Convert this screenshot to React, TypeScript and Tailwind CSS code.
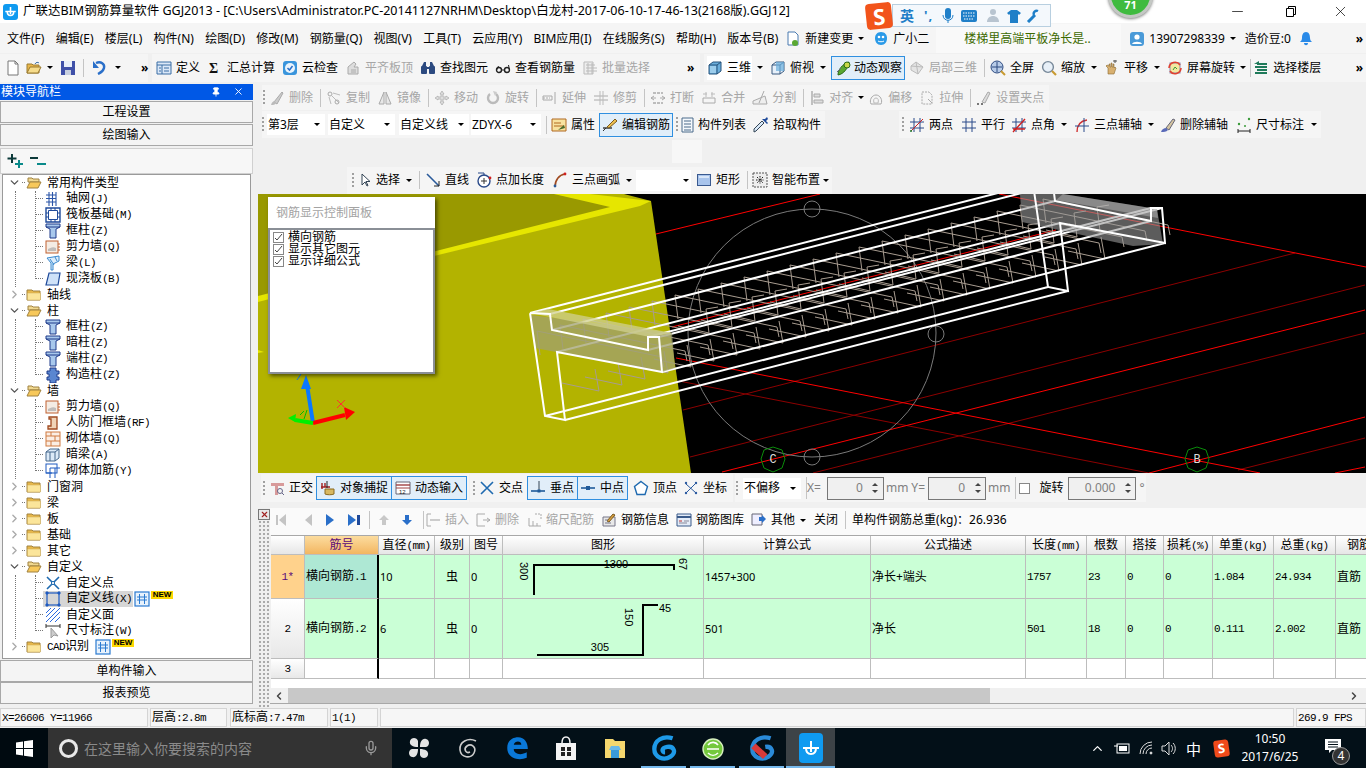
import type { ReactNode } from "react";
import { Minus, X, ChevronRight, ChevronDown, ChevronLeft, ChevronUp, Mic, Pin } from "lucide-react";

const icons: Record<string, ReactNode> = {
  doc: <><path d="M3 1h7l3 3v11H3z" fill="#fff" stroke="#777" /><path d="M10 1v3h3" stroke="#777" /></>,
  open: <><path d="M1 4h5l1 1h6v8H1z" fill="#e8b64a" stroke="#9a7a30" /><path d="M1 13l3-6h11l-3 6z" fill="#f6dc8c" stroke="#9a7a30" /><path d="M9 4c1-2 3-2 4-1" stroke="#3a6ea5" /></>,
  save: <><path d="M1 1h14v14H1z" fill="#3f50a8" /><path d="M4 1h8v6H4z" fill="#e8eef8" /><path d="M5 10h6v5H5z" fill="#c8d0e0" /></>,
  undo: <><path d="M5 3c5-2 9 1 8 5s-4 5-6 6" stroke="#2a6fc9" strokeWidth="2.4" /><path d="M2 1v7h6z" fill="#2a6fc9" /></>,
  define: <><path d="M1 2h14v12H1z" fill="#dbe8f8" stroke="#3a6ea5" /><path d="M1 5h14M6 5v9M3 8h2M3 11h2M8 8h5M8 11h5" stroke="#3a6ea5" /></>,
  sigma: <text x="2" y="13" fontSize="14" fontWeight="700" fill="#111" fontFamily="Liberation Serif">Σ</text>,
  cloud: <><rect x="1" y="1" width="14" height="14" rx="3" fill="#3a95dc" /><circle cx="8" cy="8" r="5" fill="#eaf4fc" /><path d="M5.5 8l2 2 3-4" stroke="#2a6fc9" strokeWidth="1.5" /></>,
  flush: <><path d="M3 14V7l6-5 2 2-2 3h4v7z" fill="#ddd" stroke="#aaa" /><path d="M6 10h5M6 12h5" stroke="#aaa" /></>,
  binoc: <><path d="M2 6l2-4h2v4zM14 6l-2-4h-2v4z" fill="#2c4a80" /><rect x="1" y="6" width="6" height="8" rx="1" fill="#2c4a80" /><rect x="9" y="6" width="6" height="8" rx="1" fill="#2c4a80" /><path d="M7 8h2" stroke="#2c4a80" strokeWidth="2" /></>,
  glass: <><circle cx="4" cy="10" r="2.5" stroke="#222" strokeWidth="1.4" /><circle cx="12" cy="10" r="2.5" stroke="#222" strokeWidth="1.4" /><path d="M6.5 10h3M1.5 10l2-4M14.5 10l-1-5" stroke="#222" /></>,
  batch: <><path d="M2 2h9v12H2z" fill="#eee" stroke="#bbb" /><path d="M4 5h9M4 8h11M4 11h11M6 3v11M10 3v11" stroke="#bbb" /></>,
  cube: <><path d="M2 5l4-3h8v9l-4 3H2z" fill="#6aaedc" stroke="#26527a" /><path d="M2 5h8v9M10 5l4-3" stroke="#26527a" /><path d="M3 6h6v7H3z" fill="#9ccdec" /></>,
  top: <><path d="M2 5l4-3h8v9l-4 3H2z" fill="#e6f0fa" stroke="#3a5a80" /><path d="M2 5h8v9M10 5l4-3" stroke="#3a5a80" /><path d="M6 2h8v9H6z" fill="#6aaedc" opacity=".7" /></>,
  orbit: <><path d="M2 15c0-5 4-11 11-13-1 6-5 12-11 13z" fill="#5aa832" stroke="#2c6a18" /><circle cx="11" cy="5" r="3" fill="#c8d84a" stroke="#2c6a18" /><path d="M1 12l4-4" stroke="#667" /></>,
  local: <><path d="M2 6l5-4 7 5-5 7-7-4z" fill="#e4e4e4" stroke="#bbb" /><path d="M7 2l2 12M2 6l12 1" stroke="#bbb" /></>,
  full: <><circle cx="7" cy="7" r="6" fill="#b8cce8" stroke="#2c4a80" /><path d="M7 2v10M2 7h10" stroke="#2c4a80" /><path d="M11 11l4 4" stroke="#c89a30" strokeWidth="2" /></>,
  zoom: <><circle cx="7" cy="7" r="5.4" fill="#e8f0f8" stroke="#789" strokeWidth="1.4" /><path d="M11 11l4 4" stroke="#c89a30" strokeWidth="2.2" /></>,
  pan: <><path d="M4 14V8L2 6l1-1 2 1V4h1v3h1V3h1v4h1V4h1v4l1-1 1 1-2 6z" fill="#d8b070" stroke="#8a6a30" strokeWidth=".6" /><path d="M9 1h4M11 0v3" stroke="#555" /></>,
  spin: <><rect x="3" y="3" width="10" height="10" fill="#f4e8a0" stroke="#88a" /><path d="M2 8a6 6 0 0 1 11-3M14 8a6 6 0 0 1-11 3" stroke="#e04030" strokeWidth="1.6" /><path d="M6 10l2-3 2 2" stroke="#3a9a3a" /></>,
  floors: <><path d="M4 4h10M2 7h12M4 10h10M2 13h12" stroke="#1f7a5a" strokeWidth="2" /><path d="M6 1L1 4h5z" fill="#1f7a5a" /></>,
  brush: <><path d="M5 12L13 2l1 1-6 11z" fill="#ccc" stroke="#aaa" /><path d="M2 15c1-3 2-4 4-4l1 2c-1 2-3 2-5 2z" fill="#bbb" /></>,
  copy: <><circle cx="4" cy="4" r="2" stroke="#aaa" /><path d="M6 6l7 7M7 3l7 2M3 7l2 7" stroke="#bbb" /><circle cx="11" cy="12" r="2" stroke="#aaa" /></>,
  mirror: <><path d="M7 2L2 14h5zM9 2l5 12H9z" fill="#e8e8e8" stroke="#aaa" /></>,
  move: <path d="M8 1l2 3H9v3h3V6l3 2-3 2V9H9v3h1l-2 3-2-3h1V9H4v1L1 8l3-2v1h3V4H6z" fill="#ddd" stroke="#aaa" strokeWidth=".7" />,
  rot: <><path d="M11 4a5 5 0 1 1-6 0" stroke="#bbb" strokeWidth="2.4" /><path d="M8 1l4 1-2 4z" fill="#ccc" /></>,
  extend: <><path d="M1 8h7" stroke="#aaa" strokeDasharray="2 1" /><path d="M1 6h9v4H1zM13 2v12" stroke="#aaa" /></>,
  trim: <><path d="M1 6h14M1 10h14" stroke="#aaa" /><path d="M7 1v14M10 1v14" stroke="#bbb" /></>,
  breakl: <><path d="M3 3h10M3 13h10" stroke="#aaa" strokeWidth="1.4" strokeDasharray="3 1" /><path d="M1 8h5M10 8h5M4 6L1 8l3 2M12 6l3 2-3 2" stroke="#aaa" /></>,
  merge: <><path d="M2 8h12v5H2z" stroke="#aaa" /><path d="M5 2v5M11 2v5M2 4h4M10 4h4" stroke="#bbb" /></>,
  split: <><path d="M1 14h14L13 6 1 11z" fill="#eee" stroke="#aaa" /><path d="M12 1l-5 12" stroke="#aaa" /></>,
  align: <><path d="M3 1v14" stroke="#aaa" strokeWidth="1.4" /><path d="M5 4h6v3H5zM5 10h9v3H5z" fill="#ddd" stroke="#aaa" /></>,
  offset: <><path d="M3 14c-2-4 1-9 5-9s7 5 5 9z" stroke="#aaa" /><path d="M6 13c-1-3 0-5 2-5s3 2 2 5z" stroke="#bbb" /></>,
  stretch: <><path d="M3 2h7l3 3v9H3z" stroke="#aaa" strokeDasharray="2 1" /><path d="M9 9l4 4" stroke="#aaa" /></>,
  gripset: <><path d="M6 12L12 2l2 1-5 10z" fill="#ddd" stroke="#aaa" /><path d="M1 14h2M5 14h2" stroke="#777" strokeWidth="2" /></>,
  attr: <><path d="M1 2h14v12H1z" fill="#f7e2a0" stroke="#b06820" /><path d="M3 6h7M3 9h10" stroke="#b06820" /><path d="M7 13l6-5 1 3z" fill="#4a6a2a" /></>,
  pencil: <><path d="M1 11h9" stroke="#333" strokeWidth="1.4" /><path d="M5 10l8-8 2 2-8 7z" fill="#eec050" stroke="#7a5a20" /><path d="M1 14l3-3" stroke="#333" /></>,
  list: <><path d="M4 1h11v14H4z" fill="#f4f8fc" stroke="#4a6a8a" /><path d="M6 4h7M6 7h7M6 10h7M6 13h7" stroke="#4a6a8a" /></>,
  pick: <><path d="M1 15l2-1 8-8-2-2-8 8z" fill="#d8e8f8" stroke="#345" /><path d="M9 2l5 5 1-1-2-2 2-2-1-2-2 2z" fill="#1f4a9a" /></>,
  twop: <><path d="M5 1v14M11 1v14M1 5h14M1 11h14" stroke="#2a4a8a" /><path d="M2 14L14 2" stroke="#d02020" /><circle cx="2" cy="14" r="1" fill="#1a7a2a" /></>,
  para: <path d="M5 1v14M11 1v14M1 5h14M1 11h14" stroke="#2a4a8a" />,
  angle: <><path d="M5 1v14M11 1v14M1 5h14M1 11h14" stroke="#2a4a8a" /><path d="M2 15L14 2M2 12h12" stroke="#d02020" strokeWidth="1.4" /></>,
  threea: <><path d="M3 15C3 9 6 4 13 3" stroke="#d03030" strokeWidth="1.4" /><path d="M1 9h14M10 1v14" stroke="#2a4a8a" /></>,
  delaxis: <><path d="M6 11l7-9 2 1-6 10z" fill="#d4c4a0" stroke="#667" /><path d="M1 15c1-3 3-4 5-4l2 2c-2 2-4 2-7 2z" fill="#5a6ab8" /></>,
  dims: <><path d="M2 14h12M2 12v4M14 12v4" stroke="#222" /><circle cx="3" cy="7" r="1.2" fill="#3a9a3a" /><circle cx="9" cy="9" r="1" fill="#3a9a3a" /><circle cx="13" cy="2" r="1.2" fill="#3a9a3a" /></>,
  cursor: <path d="M6 2v11l3-3 2 4 1-.5-2-4h4z" fill="#fff" stroke="#345" />,
  line: <><path d="M2 2l12 12" stroke="#2a5a9a" strokeWidth="1.6" /><path d="M14 9v5H9" stroke="#222" /></>,
  ptlen: <><circle cx="8" cy="9" r="6" fill="#fff" stroke="#2a4a8a" strokeWidth="1.4" /><path d="M8 6v6M5 9h6" stroke="#333" /><path d="M2 1h6v3" stroke="#2a4a8a" /><circle cx="14" cy="6" r="1.4" fill="#d02020" /></>,
  arc: <><path d="M3 15C3 8 7 3 13 2" stroke="#a04a20" strokeWidth="1.6" /><circle cx="3" cy="14" r="1.4" fill="#2a5a9a" /><circle cx="13" cy="2" r="1.4" fill="#d02020" /></>,
  rect: <><rect x="1.5" y="2.5" width="13" height="11" fill="#a8c4ec" stroke="#3a5a90" /><path d="M3 4h10v2H3z" fill="#d8e6f8" /></>,
  smart: <><path d="M1 1h14v14H1z" fill="#eee" stroke="#555" strokeDasharray="2 1" /><path d="M8 4v8M4 8h8M5 5l6 6M11 5l-6 6" stroke="#222" strokeDasharray="1.5 1" /></>,
  ortho: <><path d="M2 3h13v3H9v9H6V6H2z" fill="#d89a9a" /><circle cx="11" cy="11" r="2.5" stroke="#668" /><path d="M13 13l2 2" stroke="#668" /></>,
  snap: <><path d="M2 3v6M5 3v4M1 7h9" stroke="#a02020" strokeWidth="1.4" /><path d="M7 1v7" stroke="#222" /><path d="M5 9h9v5c-2 1-7 1-9 0z" fill="#d8b860" stroke="#8a6a20" /></>,
  dyn: <><path d="M1 2h14v12H1z" fill="#fff" stroke="#667" /><path d="M1 5h14" stroke="#a04040" strokeWidth="1.4" /><path d="M1 8h14" stroke="#a04040" /><text x="4" y="14" fontSize="6" fill="#222" fontFamily="Liberation Sans">12</text></>,
  cross: <path d="M2 2l12 12M14 2L2 14" stroke="#1f6ab0" strokeWidth="1.6" />,
  perp: <><path d="M1 11h14" stroke="#1f5a9a" strokeWidth="1.6" /><path d="M9 1v10" stroke="#345" /><rect x="7.5" y="9.5" width="3" height="3" fill="#1f5a9a" /></>,
  mid: <><path d="M1 8h14" stroke="#1f5a9a" strokeWidth="1.6" /><rect x="6" y="6" width="4" height="4" fill="#1f5a9a" /></>,
  vertex: <path d="M8 1.5l6.5 5-2.5 8H4l-2.5-8z" fill="#fff" stroke="#1f6ab0" strokeWidth="1.4" />,
  coord: <><path d="M3 13L13 3M3 4l10 9" stroke="#2a5aa0" /><circle cx="3" cy="3" r="1.2" fill="#2a5aa0" /><circle cx="13" cy="3" r="1.2" fill="#2a5aa0" /><circle cx="3" cy="13" r="1.2" fill="#2a5aa0" /><circle cx="13" cy="13" r="1.2" fill="#2a5aa0" /></>,
  first: <><path d="M3 3h2v10H3z" fill="#c4c4c4" /><path d="M13 2v12L6 8z" fill="#c4c4c4" /></>,
  prev: <path d="M12 2v12L5 8z" fill="#c4c4c4" />,
  next: <path d="M4 2v12l8-6z" fill="#2a6fc9" />,
  last: <><path d="M2 2v12l8-6z" fill="#2a6fc9" /><path d="M11 3h3v10h-3z" fill="#1f4a9a" /></>,
  up: <path d="M8 3l5 5h-3v5H6V8H3z" fill="#c8c8c8" />,
  down: <path d="M6 3h4v5h3l-5 5-5-5h3z" fill="#2a6fc9" />,
  ins: <><path d="M2 2h4M2 14h4M2 2v12" stroke="#aaa" /><path d="M5 7h10v2H5z" fill="#ccc" /></>,
  del: <><path d="M2 2h8M2 14h8M2 2v12" stroke="#aaa" /><path d="M8 8h7M12 6l3 2-3 2" stroke="#aaa" /></>,
  scale: <><path d="M2 14V6M6 14V9M10 14v-3M2 14h12" stroke="#aaa" /><path d="M8 2h6v5" stroke="#aaa" strokeDasharray="2 1" /></>,
  info: <><path d="M2 5h12v9H2z" fill="#e8e8e8" stroke="#778" /><path d="M6 9l6-7 2 1-6 7z" fill="#d8a040" stroke="#7a5a20" /><path d="M4 8h3M4 11h6" stroke="#778" /></>,
  lib: <><path d="M1 2h14v12H1z" fill="#e4ecf8" stroke="#3a5a8a" /><path d="M1 5h14" stroke="#3a5a8a" strokeWidth="2" /><path d="M3 9h3" stroke="#c03030" /><path d="M8 9h5M3 11h8" stroke="#889" /></>,
  other: <><path d="M1 2h10v11H1z" fill="#eef" stroke="#667" /><path d="M8 5h3V3l4 4-4 4V9H8z" fill="#2a6fc9" /></>,
  grid: <path d="M4 1v14M7.5 1v14M11 1v14M1 4h10M1 7.5h10M1 11h10" stroke="#2a55a8" strokeWidth="1.1" />,
  raft: <><path d="M1 1h14v14H1z" stroke="#1f4a9a" strokeWidth="1.4" /><path d="M3.5 3.5h9v9h-9zM1 6h2M1 10h2M13 6h2M13 10h2M6 1v2M10 1v2M6 13v2M10 13v2" stroke="#1f4a9a" /></>,
  col: <><path d="M1 1h14v3l-4 2v9H5V6L1 4z" fill="#a8c8ec" stroke="#1f3a8a" /><path d="M1 4h14" stroke="#1f3a8a" /></>,
  wall: <><rect x="1" y="2" width="12" height="12" fill="#f4ece4" stroke="#c06030" /><path d="M13 5h2M13 8h2M13 11h2" stroke="#c06030" /><path d="M3 12h8v-3c-3-2-6 0-8 1z" fill="#aaa" opacity=".7" /></>,
  beam: <><path d="M2 3l12-2v5l-6 3v6H6V8z" fill="#dcecfa" stroke="#3a8ad0" /><path d="M5 4l4 6M10 2l2 4" stroke="#3a8ad0" /></>,
  slab: <path d="M4 2h11l-2 12H1z" fill="#cfe2f8" stroke="#1f4a9a" strokeWidth="1.2" />,
  pier: <path d="M5 1h6v3h3v3h-2v3h2v3h-3v3H5v-3H2v-3h2V7H2V4h3z" fill="#5a86d0" stroke="#1f3a8a" />,
  door: <path d="M4 2h8v12H3v-3h3V4H4z" fill="#f0d4b8" stroke="#a04a20" strokeWidth="1.3" />,
  brick: <><rect x="1" y="1" width="14" height="14" fill="#fbeee4" stroke="#d07a40" /><path d="M1 5h14M1 10h14M6 1v4M10 5v5M6 10v5" stroke="#d07a40" /></>,
  hbeam: <><path d="M1 5l4-3h9v9l-4 3H1z" fill="#dceaf8" stroke="#46688c" /><path d="M1 5h9v9M10 5l4-3M5 5v9" stroke="#46688c" /></>,
  rebar: <><rect x="1" y="1" width="11" height="9" stroke="#1f5ac0" /><path d="M5 5h10M5 5v10M10 5v10M1 10h6" stroke="#1f5ac0" /></>,
  xpoint: <><path d="M2 2l12 12M14 2L2 14" stroke="#1f6ab0" strokeWidth="1.6" /><circle cx="8" cy="8" r="1.6" fill="#fff" stroke="#1f6ab0" /></>,
  sqline: <><rect x="2" y="2" width="12" height="12" stroke="#1f5ac0" strokeWidth="1.2" /><path d="M1 1h2v2H1zM13 1h2v2h-2zM1 13h2v2H1zM13 13h2v2h-2z" fill="#1f5ac0" stroke="#1f5ac0" /></>,
  hatch: <path d="M1 6l5-5M1 10l9-9M1 15L15 1M5 15L15 5M10 15l5-5" stroke="#2a6ae0" />,
  dim: <><path d="M1 1v4M15 1v4M1 3h14" stroke="#333" /><path d="M6 5v10l3-3 4 1z" fill="#ccc" stroke="#999" /></>,
  fold: <><path d="M1 3h5l1 1h7v9H1z" fill="#e8b84a" stroke="#a08240" /><path d="M1.5 6h13v7h-13z" fill="#fbe59a" stroke="#c8a858" strokeWidth=".5" /></>,
  folo: <><path d="M2 3h4l1 1h6v3H2z" fill="#f0d890" stroke="#a08240" /><path d="M1 13l3-6h11l-3 6z" fill="#f7c85a" stroke="#a08240" /></>,
  tbl: <><rect x="1" y="1" width="14" height="14" fill="#e8f2fc" stroke="#2a7ad0" strokeWidth="1.2" /><path d="M5.5 3v10M10.5 3v10M3 6h10M3 9h10" stroke="#2a7ad0" /></>,
  phone: <><rect x="1" y="1" width="14" height="14" rx="3" fill="#4a9ad8" /><circle cx="8" cy="6" r="2.6" fill="#fff" /><path d="M3 13c1-3 9-3 10 0z" fill="#fff" /></>,
  newc: <><path d="M3 1h7l3 3v10H3z" fill="#fff" stroke="#4a7ab0" /><circle cx="10" cy="12" r="3" fill="#5aa832" /></>,
  robot: <><path d="M8 1c4 0 6 3 6 6 0 4-2 7-6 7s-6-3-6-7c0-3 2-6 6-6z" fill="#2a9ae8" /><circle cx="6" cy="6" r="1.3" fill="#fff" /><circle cx="10" cy="6" r="1.3" fill="#fff" /><path d="M5 10c1 1 5 1 6 0" stroke="#fff" /></>,
  bell: <path d="M8 1c3 0 4 3 4 6 0 2 1 3 2 4H2c1-1 2-2 2-4 0-3 1-6 4-6zM6 12h4c0 3-4 3-4 0z" fill="#2a8ae8" />,
};

function I({ n }: { n: string }) {
  return (
    <svg width={16} height={16} viewBox="0 0 16 16" fill="none" className="shrink-0">
      {icons[n]}
    </svg>
  );
}

function Caret({ cn = "" }: { cn?: string }) {
  return <span className={`shrink-0 w-0 h-0 border-x-[3px] border-x-transparent border-t-[3px] border-t-black ${cn}`} />;
}

function Grip({ cn = "" }: { cn?: string }) {
  return <span className={`shrink-0 w-[2px] h-[15px] bg-[repeating-linear-gradient(to_bottom,#a0a0a0_0_2px,transparent_2px_4px)] ${cn}`} />;
}

function Sep({ cn = "" }: { cn?: string }) {
  return <span className={`shrink-0 w-px h-[18px] bg-[#c4c4c4] -mr-[2px] ${cn}`} />;
}

function More({ cn = "" }: { cn?: string }) {
  return <span className={`text-[12px] font-bold leading-none ${cn}`}>»</span>;
}

type ToolProps = { i: string; t: string; cn?: string; off?: boolean; caret?: boolean };

function Tool({ i, t, cn = "", off, caret }: ToolProps) {
  return (
    <div className={`flex items-center gap-[4px] shrink-0 ${off ? "text-[#a6a6a6]" : ""} ${cn}`}>
      <I n={i} />
      <span className="whitespace-nowrap">{t}</span>
      {caret && <Caret cn="ml-[1px]" />}
    </div>
  );
}

// 蓝框按下状态的按钮
function On({ i, t, cn = "" }: { i: string; t: string; cn?: string }) {
  return (
    <div className={`flex items-center gap-[4px] shrink-0 h-[24px] border border-[#2f8fe0] bg-[#e1eef9] ${cn}`}>
      <I n={i} />
      <span className="whitespace-nowrap">{t}</span>
    </div>
  );
}

function Combo({ t, cn }: { t: string; cn: string }) {
  return (
    <div className={`flex items-center justify-between shrink-0 h-[21px] bg-white pl-[1px] pr-[5px] ${cn}`}>
      <span className="whitespace-nowrap">{t}</span>
      <Caret />
    </div>
  );
}

// 宋体风格：ascii 半角 6px 等宽
function Sim({ t }: { t: string }) {
  const parts = t.split(/([\x20-\x7e]+)/).filter(Boolean);
  return (
    <span className="whitespace-nowrap">
      {parts.map((p, k) =>
        /^[\x20-\x7e]+$/.test(p) ? (
          <span key={k} className="font-['Liberation_Mono',monospace] text-[11px] tracking-[-0.6px]">
            {p}
          </span>
        ) : (
          <span key={k}>{p}</span>
        )
      )}
    </span>
  );
}

function NewBadge() {
  return (
    <span className="flex items-start h-[16px] ml-[1px]">
      <I n="tbl" />
      <span className="ml-[1px] mt-[0px] h-[8px] w-[22px] bg-[#ffd800] text-[8px] leading-[8px] text-center font-['Liberation_Sans',sans-serif] font-bold">NEW</span>
    </span>
  );
}

function Leaf({ i, t, sel, badge }: { i: string; t: string; sel?: boolean; badge?: boolean }) {
  return (
    <div className="flex items-center h-[16px] pl-[32px]">
      <span className="w-[8px] border-t border-dotted border-[#777]" />
      <span className={`flex items-center gap-[5px] h-[16px] pl-[2px] pr-[1px] ${sel ? "bg-[#d6d6d6]" : ""}`}>
        <I n={i} />
        <Sim t={t} />
      </span>
      {badge && <NewBadge />}
    </div>
  );
}

function Folder({ t, open, badge, children }: { t: string; open?: boolean; badge?: boolean; children?: ReactNode }) {
  return (
    <div>
      <div className="flex items-center h-[16px] pl-[5px]">
        {open ? <ChevronDown size={13} strokeWidth={2.5} className="text-[#555] shrink-0" /> : <ChevronRight size={13} strokeWidth={2.5} className="text-[#aaa] shrink-0" />}
        <span className="w-[3px] ml-[1px] mr-[1px] border-t border-dotted border-[#777]" />
        <I n={open ? "folo" : "fold"} />
        <span className="ml-[5px] flex items-center gap-[5px]">
          <Sim t={t} />
          {badge && <NewBadge />}
        </span>
      </div>
      {open && (
        <div className="relative">
          <span className="absolute left-[12px] top-0 bottom-0 border-l border-dotted border-[#777]" />
          <span className="absolute left-[32px] top-0 bottom-[8px] border-l border-dotted border-[#777]" />
          {children}
        </div>
      )}
    </div>
  );
}

function NavBtn({ t }: { t: string }) {
  return <div className="h-[22px] shrink-0 border border-[#a8a8a8] bg-[#f4f4f4] flex items-center justify-center">{t}</div>;
}

function TreePanel() {
  return (
    <div className="w-[253px] shrink-0 h-[620px] flex flex-col">
      <div className="h-[16px] bg-[#0058e6] text-white flex items-center pl-[1px] pr-[9px] leading-none">
        <span className="flex-1">模块导航栏</span>
        <Pin size={10} className="mr-[12px]" fill="white" />
        <X size={11} />
      </div>
      <div className="h-[1px]" />
      <NavBtn t="工程设置" />
      <div className="h-[1px]" />
      <NavBtn t="绘图输入" />
      <div className="h-[2px]" />
      <div className="h-[26px] border border-[#d0d0d0] bg-[#f7f7f7] flex items-center pl-[5px] gap-[5px]">
        <svg width="18" height="15" viewBox="0 0 18 15" fill="none">
          <path d="M6 1v9M1.500 5.500h9" stroke="#0c3a3a" strokeWidth="2" />
          <path d="M13 7v8M9 11h8" stroke="#0a8a8a" strokeWidth="2" />
        </svg>
        <svg width="18" height="15" viewBox="0 0 18 15" fill="none">
          <path d="M1 5h8" stroke="#0c3a3a" strokeWidth="2" />
          <path d="M8 11h9" stroke="#0a8a8a" strokeWidth="2" />
        </svg>
      </div>
      <div className="mx-[2px] h-[488px] border border-[#9a9a9a] bg-white overflow-hidden">
        <Folder t="常用构件类型" open>
          <Leaf i="grid" t="轴网(J)" />
          <Leaf i="raft" t="筏板基础(M)" />
          <Leaf i="col" t="框柱(Z)" />
          <Leaf i="wall" t="剪力墙(Q)" />
          <Leaf i="beam" t="梁(L)" />
          <Leaf i="slab" t="现浇板(B)" />
        </Folder>
        <Folder t="轴线" />
        <Folder t="柱" open>
          <Leaf i="col" t="框柱(Z)" />
          <Leaf i="col" t="暗柱(Z)" />
          <Leaf i="col" t="端柱(Z)" />
          <Leaf i="pier" t="构造柱(Z)" />
        </Folder>
        <Folder t="墙" open>
          <Leaf i="wall" t="剪力墙(Q)" />
          <Leaf i="door" t="人防门框墙(RF)" />
          <Leaf i="brick" t="砌体墙(Q)" />
          <Leaf i="hbeam" t="暗梁(A)" />
          <Leaf i="rebar" t="砌体加筋(Y)" />
        </Folder>
        <Folder t="门窗洞" />
        <Folder t="梁" />
        <Folder t="板" />
        <Folder t="基础" />
        <Folder t="其它" />
        <Folder t="自定义" open>
          <Leaf i="xpoint" t="自定义点" />
          <Leaf i="sqline" t="自定义线(X)" sel badge />
          <Leaf i="hatch" t="自定义面" />
          <Leaf i="dim" t="尺寸标注(W)" />
        </Folder>
        <Folder t="CAD识别" badge />
      </div>
      <div className="h-[1px]" />
      <NavBtn t="单构件输入" />
      <NavBtn t="报表预览" />
    </div>
  );
}

const STIRRUPS = Array.from({ length: 23 }, (_, k) => ({ x: 537 + 23 * k, y: 331 - 6 * k }));
const SHORT = STIRRUPS.slice(3, 21);

const BRIGHT = [
  "999,194 1366,267",
  "676,358 1260,473",
  "656,234 820,194",
  "722,472 1365,310",
  "1149,473 1365,417",
  "1335,473 1365,467",
  "672,327 1056,230",
];
const DARK = [
  "679,381 1149,473",
  "683,410 1295,253",
  "690,457 1365,285",
  "813,473 1365,333",
  "1238,470 1365,438",
];

// Z 形截面轮廓，远端 = 近端 + FAR
const PROFILE: [number, number][] = [
  [530, 313], [550, 314], [552, 330], [648, 350], [648, 337], [659, 337], [662, 372], [557, 352], [565, 420], [545, 416],
];
const FAR: [number, number] = [503, -129];
const pts = (list: [number, number][], dx = 0, dy = 0) =>
  [...list, list[0]].map(([x, y]) => `${x + dx},${y + dy}`).join(" ");

function Scene() {
  return (
    <svg viewBox="258 194 1108 279" className="block w-full h-full" fill="none">
      <rect x="258" y="194" width="1108" height="279" fill="#000" />
      {DARK.map((p) => <polyline key={p} points={p} stroke="#8c0000" strokeWidth="1" />)}
      {BRIGHT.map((p) => <polyline key={p} points={p} stroke="#ff0000" strokeWidth="1" />)}
      <circle cx="812" cy="333" r="124" stroke="#7a7a7a" />
      <circle cx="812" cy="209" r="8" stroke="#7a7a7a" />
      <circle cx="936" cy="334" r="8" stroke="#7a7a7a" />
      <circle cx="812" cy="457" r="8" stroke="#7a7a7a" />
      <polygon points="773,447 782,450 785,459 782,468 773,472 764,468 761,459 764,450" stroke="#0a8a0a" />
      <polygon points="1197,447 1206,450 1209,459 1206,468 1197,472 1188,468 1185,459 1188,450" stroke="#0a8a0a" />
      <text x="773" y="463" textAnchor="middle" fontSize="12" fill="#ddd" fontFamily="Liberation Mono">C</text>
      <text x="1197" y="463" textAnchor="middle" fontSize="12" fill="#ddd" fontFamily="Liberation Mono">B</text>
      <polygon points="258,194 624,194 651,201 691,473 258,473" fill="#b3b300" />
      <polygon points="258,194 554,194 620,207 258,297" fill="#999900" />
      <polygon points="554,194 590,194 651,201 640,206 434,256 258,302 258,296 610,207" fill="#e6e600" />
      <polygon points="258,350 264,352 258,353" fill="#e6e600" />
      {STIRRUPS.map((s) => (
        <g key={s.x} stroke="#a89c90" strokeWidth="1">
          <polyline points={`${s.x + 3},${s.y + 24} ${s.x},${s.y} ${s.x + 125},${s.y + 26} ${s.x + 127},${s.y + 36}`} />
          <polyline points={`${s.x + 58},${s.y + 38} ${s.x + 62},${s.y + 60} ${s.x + 25},${s.y + 52}`} />
        </g>
      ))}
      {SHORT.map((s) => (
        <polyline key={s.x} points={`${s.x + 112},${s.y - 6} ${s.x + 100},${s.y - 4} ${s.x + 103},${s.y + 20} ${s.x + 72},${s.y + 13}`} stroke="#a89c90" strokeWidth="1" />
      ))}
      {PROFILE.map(([x, y]) => (
        <line key={x} x1={x} y1={y} x2={x + FAR[0]} y2={y + FAR[1]} stroke="#fff" strokeWidth="2" />
      ))}
      {/* 半透明端面 */}
      <polygon points="1020,194 1063,194 1157,209 1163,244 1133,246 1022,222" fill="#999" opacity="0.6" />
      <polygon points="1063,194 1157,209 1158,218 1056,200" fill="#ccc" opacity="0.4" />
      <polygon points="531,315 535,348 662,372 675,368 672,333" fill="#a0a070" opacity="0.75" />
      <polygon points="530,313 548,309 672,333 650,337" fill="#d0d090" opacity="0.75" />
      <polyline points={pts(PROFILE, FAR[0], FAR[1])} stroke="#fff" strokeWidth="2" />
      <polyline points={pts(PROFILE)} stroke="#fff" strokeWidth="2" />
      <path d="M313 423L307 385" stroke="#0a78ff" strokeWidth="4" />
      <path d="M306 375l-5 14h10z" fill="#0a78ff" />
      <path d="M313 423l32-8" stroke="#ff0000" strokeWidth="4" />
      <path d="M355 412l-11-5 2 13z" fill="#ff0000" />
      <path d="M313 423l-18-3" stroke="#00f000" strokeWidth="4" />
      <path d="M288 418l8-4-1 8z" fill="#00f000" />
      <path d="M297 380l6-9h-6l6 0" stroke="#0a78ff" />
      <path d="M337 408l8-8M337 400l8 8" stroke="#ff3030" />
      <path d="M300 415l4-4M304 419l3-9" stroke="#00c000" />
    </svg>
  );
}

function CheckRow({ t }: { t: string }) {
  return (
    <div className="flex items-center h-[12px] pl-[3px] gap-[4px]">
      <span className="w-[11px] h-[11px] border border-[#888] bg-white flex items-center justify-center shrink-0">
        <svg width="9" height="9" viewBox="0 0 9 9" fill="none"><path d="M1 5l2 2 5-6" stroke="#444" /></svg>
      </span>
      <span className="leading-[12px] whitespace-nowrap">{t}</span>
    </div>
  );
}

function Spin({ t, cn }: { t: string; cn: string }) {
  return (
    <div className={`flex items-center justify-end h-[23px] border border-[#777] bg-[#f0f0f0] text-[#808080] shrink-0 ${cn}`}>
      <span>{t}</span>
      <span className="w-[15px] ml-[5px] flex flex-col items-center gap-[4px]">
        <span className="w-0 h-0 border-x-[3px] border-x-transparent border-b-[3px] border-b-[#444]" />
        <span className="w-0 h-0 border-x-[3px] border-x-transparent border-t-[3px] border-t-[#444]" />
      </span>
    </div>
  );
}

const HEAD = "flex items-center justify-center border-r border-b border-[#bdbdbd] bg-gradient-to-b from-white to-[#e6e6e6] overflow-hidden";
const CELL = "flex items-center pl-[1px] border-r border-b border-[#bdbdbd] bg-[#caffd6] overflow-hidden";
const CENTER = "flex items-center justify-center border-r border-b border-[#bdbdbd] bg-[#caffd6]";
const BLANK = "border-r border-b border-[#bdbdbd] bg-white";
const SIDE = "flex items-center justify-center border-r border-b border-[#bdbdbd] bg-gradient-to-b from-white to-[#e8e8e8]";

function DataRow({ no, name, d, formula, desc, len, n, unit, total, shape, active }: {
  no: string; name: string; d: string; formula: string; desc: string; len: string; n: string; unit: string; total: string; shape: ReactNode; active?: boolean;
}) {
  return (
    <>
      <div className={active ? "flex items-center justify-center border-r border-b border-[#bdbdbd] bg-[#ffd28c] text-[#5a0a7a]" : SIDE}><Sim t={no} /></div>
      <div className={`flex items-center pl-[1px] border-r-2 border-r-black border-b border-b-[#bdbdbd] ${active ? "bg-[#aee8d4]" : "bg-[#caffd6]"}`}><Sim t={name} /></div>
      <div className={`${CELL} text-[11px]`}>{d}</div>
      <div className={CENTER}>虫</div>
      <div className={`${CELL} text-[11px]`}>0</div>
      <div className={`${CELL} !pl-0`}>{shape}</div>
      <div className={`${CELL} text-[11px]`}>{formula}</div>
      <div className={CELL}>{desc}</div>
      <div className={CELL}><Sim t={len} /></div>
      <div className={CELL}><Sim t={n} /></div>
      <div className={CELL}><Sim t="0" /></div>
      <div className={CELL}><Sim t="0" /></div>
      <div className={CELL}><Sim t={unit} /></div>
      <div className={CELL}><Sim t={total} /></div>
      <div className="flex items-center pl-[1px] border-b border-[#bdbdbd] bg-[#caffd6]">直筋</div>
    </>
  );
}

function SteelTable() {
  const heads = ["直径(mm)", "级别", "图号", "图形", "计算公式", "公式描述", "长度(mm)", "根数", "搭接", "损耗(%)", "单重(kg)", "总重(kg)"];
  return (
    <div className="grid grid-cols-[34px_74px_56px_35px_33px_201px_167px_155px_61px_39px_38px_49px_61px_62px_30px] grid-rows-[19px_44px_60px_20px] border-t border-[#a8a8a8]">
      <div className={HEAD} />
      <div className="flex items-center justify-center border-r border-b border-[#bdbdbd] bg-gradient-to-b from-[#fcdc9e] to-[#f2b660] text-[#5a0a7a]">筋号</div>
      {heads.map((h) => <div key={h} className={HEAD}><Sim t={h} /></div>)}
      <div className="flex items-center pl-[11px] border-b border-[#bdbdbd] bg-gradient-to-b from-white to-[#e6e6e6] overflow-hidden whitespace-nowrap">钢筋归类</div>

      <DataRow
        active no="1*" name="横向钢筋.1" d="10" formula="1457+300" desc="净长+端头" len="1757" n="23" unit="1.084" total="24.934"
        shape={
          <svg width="200" height="43" viewBox="0 0 200 43" fill="none" className="shrink-0">
            <path d="M31 40V10H171V15" stroke="#000" strokeWidth="2" />
            <text x="113" y="13" textAnchor="middle" fontSize="11" fill="#000" fontFamily="Liberation Sans">1300</text>
            <text transform="translate(17 7) rotate(90)" fontSize="11" fill="#000" fontFamily="Liberation Sans">300</text>
            <text transform="translate(176 3) rotate(90)" fontSize="11" fill="#000" fontFamily="Liberation Sans">67</text>
          </svg>
        }
      />
      <DataRow
        no="2" name="横向钢筋.2" d="6" formula="501" desc="净长" len="501" n="18" unit="0.111" total="2.002"
        shape={
          <svg width="200" height="59" viewBox="0 0 200 59" fill="none" className="shrink-0">
            <path d="M34 56H140V6H155" stroke="#000" strokeWidth="2" />
            <text x="97" y="52" textAnchor="middle" fontSize="11" fill="#000" fontFamily="Liberation Sans">305</text>
            <text x="156" y="13" fontSize="11" fill="#000" fontFamily="Liberation Sans">45</text>
            <text transform="translate(122 9) rotate(90)" fontSize="11" fill="#000" fontFamily="Liberation Sans">150</text>
          </svg>
        }
      />
      <div className={SIDE}><Sim t="3" /></div>
      <div className="border-r-2 border-r-black border-b border-b-[#bdbdbd] bg-white" />
      {Array.from({ length: 12 }, (_, k) => <div key={k} className={BLANK} />)}
      <div className="border-b border-[#bdbdbd] bg-white" />
    </div>
  );
}

function TaskIcon({ children, cn = "" }: { children: ReactNode; cn?: string }) {
  return <div className={`w-[49px] h-full flex items-center justify-center relative shrink-0 ${cn}`}>{children}</div>;
}

function Taskbar() {
  return (
    <div className="h-[40px] bg-[#031018] flex items-center text-white shrink-0">
      <div className="w-[48px] h-full flex items-center justify-center bg-[#000a10]">
        <svg width="17" height="17" viewBox="0 0 17 17" fill="#fff"><path d="M0 2.500L7 1.500V8H0zM8 1.300L17 0v8H8zM0 9h7v6.500L0 14.500zM8 9h9v8l-9-1.300z" /></svg>
      </div>
      <div className="w-[344px] h-full bg-[#333333] flex items-center pl-[11px] text-[#8a8a8a]">
        <span className="w-[19px] h-[19px] rounded-full border-[3px] border-[#e8e8e8] shrink-0" />
        <span className="ml-[6px] mt-[1px] text-[14px] leading-none whitespace-nowrap">在这里输入你要搜索的内容</span>
        <Mic size={16} className="ml-auto mr-[13px] text-[#999]" />
      </div>
      <div className="flex h-full items-center ml-[2px]">
        <TaskIcon>
          <svg width="24" height="24" viewBox="0 0 24 24" fill="#e4e4e4">
            <path d="M11 11C6 11 2 9 3 5s7-4 8 0zM13 11c0-5 2-9 6-8s4 7 0 8zM13 13c5 0 9 2 8 6s-7 4-8 0zM11 13c0 5-2 9-6 8s-4-7 0-8z" />
          </svg>
        </TaskIcon>
        <TaskIcon>
          <svg width="24" height="24" viewBox="0 0 24 24" fill="none" stroke="#ccc" strokeWidth="1.6">
            <path d="M20 5C12 1 3 6 4 14s11 9 14 3-3-10-7-7-1 8 3 6" />
          </svg>
        </TaskIcon>
        <TaskIcon>
          <svg width="26" height="26" viewBox="0 0 24 24" fill="#0a78d8">
            <path d="M3 12C3 5 8 2 13 2c6 0 9 5 9 11H9c0 5 7 6 12 3v5c-7 3-18 1-18-9zm6-3h7c0-4-6-4-7 0z" />
          </svg>
        </TaskIcon>
        <TaskIcon>
          <svg width="22" height="26" viewBox="0 0 22 26" fill="none">
            <path d="M1 8h20v17H1z" fill="#f4f4f4" />
            <path d="M7 8c0-8 8-8 8 0" stroke="#f4f4f4" strokeWidth="1.5" />
            <path d="M6 12h4v4H6zM12 12h4v4h-4zM6 17h4v4H6zM12 17h4v4h-4z" fill="#222" />
          </svg>
        </TaskIcon>
        <TaskIcon>
          <svg width="24" height="24" viewBox="0 0 24 24" fill="none">
            <path d="M2 3h8l2 2h10v17H2z" fill="#f5d76e" />
            <path d="M8 14h8v8H8z" fill="#3a9ad8" />
            <path d="M6 14h12l-2-4H8z" fill="#6ab8e8" />
          </svg>
        </TaskIcon>
        <TaskIcon>
          <svg width="26" height="28" viewBox="0 0 24 26" fill="none">
            <path d="M20 4C11 1 3 6 3 14s9 11 15 7 3-10-3-9-5 5-2 5" stroke="#1e9ae8" strokeWidth="4" />
          </svg>
          <span className="absolute bottom-0 left-[2px] right-[2px] h-[2px] bg-[#76b9ed]" />
        </TaskIcon>
        <TaskIcon>
          <svg width="24" height="28" viewBox="0 0 24 26">
            <circle cx="12" cy="14" r="10" fill="#74c83c" stroke="#d8f0c0" strokeWidth="1.4" />
            <path d="M6 14h12M7 10c3-4 8-3 10 0M7 18c3 3 7 3 10 0" stroke="#fff" strokeWidth="1.6" fill="none" />
          </svg>
          <span className="absolute bottom-0 left-[2px] right-[2px] h-[2px] bg-[#76b9ed]" />
        </TaskIcon>
        <TaskIcon>
          <svg width="26" height="28" viewBox="0 0 24 26" fill="none">
            <path d="M20 4C11 1 3 6 3 14s9 11 15 7 3-10-3-9" stroke="#2a8ad8" strokeWidth="4" />
            <path d="M4 11l11 10" stroke="#d83a3a" strokeWidth="6" />
          </svg>
          <span className="absolute bottom-0 left-[2px] right-[2px] h-[2px] bg-[#76b9ed]" />
        </TaskIcon>
        <TaskIcon cn="bg-[#3d4347]">
          <span className="w-[24px] h-[30px] rounded-[4px] bg-[#0f9af0] flex items-center justify-center">
            <svg width="20" height="20" viewBox="0 0 20 20" fill="none" stroke="#fff" strokeWidth="2"><path d="M2 10h16M10 3v11M5 10c0 5 2 6 5 6s5-1 5-6" /></svg>
          </span>
          <span className="absolute bottom-0 left-0 right-0 h-[2px] bg-[#76b9ed]" />
        </TaskIcon>
      </div>
      <div className="flex-1" />
      <div className="flex items-center h-full">
        <ChevronUp size={15} className="mr-[9px]" />
        <svg width="16" height="14" viewBox="0 0 16 14" fill="none" className="mr-[9px]">
          <rect x="3" y="3" width="12" height="9" stroke="#fff" /><rect x="5" y="5" width="8" height="5" fill="#fff" /><path d="M0 5h4" stroke="#fff" />
        </svg>
        <svg width="14" height="14" viewBox="0 0 14 14" fill="none" stroke="#ddd" className="mr-[8px]">
          <path d="M1 13a12 12 0 0 1 12-12M4 13a9 9 0 0 1 9-9M7 13a6 6 0 0 1 6-6" /><circle cx="12" cy="12" r="1" fill="#fff" />
        </svg>
        <svg width="15" height="15" viewBox="0 0 15 15" fill="none" stroke="#ddd" className="mr-[10px]">
          <path d="M1 5h3l4-4v13l-4-4H1zM10 4c2 2 2 5 0 7M12 2c3 3 3 8 0 11" />
        </svg>
        <span className="text-[15px] w-[18px] mr-[10px] font-['Noto_Sans_CJK_SC',sans-serif]">中</span>
        <span className="w-[15px] h-[17px] rounded-[3px] bg-[#f04a1a] rotate-[-8deg] text-[13px] font-bold flex items-center justify-center leading-none mr-[8px]">S</span>
        <div className="w-[66px] flex flex-col items-center text-[12px] leading-[18px]">
          <span>10:50</span>
          <span>2017/6/25</span>
        </div>
        <div className="w-[60px] h-full relative flex items-center justify-center ml-[3px]">
          <svg width="16" height="15" viewBox="0 0 16 15" fill="#fff" className="mb-[4px] mr-[6px]">
            <path d="M0 0h16v11H7l-3 3v-3H0z" />
            <path d="M3 3h10M3 5.500h10M3 8h10" stroke="#031018" />
          </svg>
          <span className="absolute left-[26px] top-[19px] w-[18px] h-[18px] rounded-full bg-[#333] border border-[#999] text-[12px] flex items-center justify-center leading-none">4</span>
        </div>
      </div>
    </div>
  );
}

export default function App() {
  return (
    <div className="relative w-[1366px] h-[768px] overflow-hidden flex flex-col bg-[#f0f0f0] text-[12px] leading-none text-black font-['Noto_Sans','Noto_Sans_CJK_SC',sans-serif]">
      {/* 标题栏 */}
      <div className="h-[23px] bg-white flex items-center shrink-0">
        <span className="ml-[3px] w-[15px] h-[16px] rounded-[3px] bg-[#0f9af0] flex items-center justify-center">
          <svg width="13" height="13" viewBox="0 0 20 20" fill="none" stroke="#fff" strokeWidth="2.4"><path d="M2 10h16M10 3v11M5 10c0 5 2 6 5 6s5-1 5-6" /></svg>
        </span>
        <span className="ml-[5px] text-[12.5px] whitespace-nowrap">广联达BIM钢筋算量软件 GGJ2013 - [C:\Users\Administrator.PC-20141127NRHM\Desktop\白龙村-2017-06-10-17-46-13(2168版).GGJ12]</span>
        <Minus size={17} strokeWidth={1} className="ml-auto mr-[40px]" />
        <svg width="10" height="11" viewBox="0 0 10 11" fill="none" stroke="#000" className="mr-[36px]"><path d="M.5 2.500h7v8h-7zM2.500 2.500V.5h7v8h-2" /></svg>
        <X size={17} strokeWidth={1} className="mr-[17px]" />
      </div>

      {/* 菜单栏 */}
      <div className="h-[30px] bg-[#f5f5f5] flex items-center shrink-0 pl-[7px] pt-[1px]">
        <div className="flex items-center gap-[11.25px]">
          {["文件(F)", "编辑(E)", "楼层(L)", "构件(N)", "绘图(D)", "修改(M)", "钢筋量(Q)", "视图(V)", "工具(T)", "云应用(Y)", "BIM应用(I)", "在线服务(S)", "帮助(H)", "版本号(B)"].map((m) => (
            <span key={m} className="whitespace-nowrap">{m}</span>
          ))}
        </div>
        <Tool i="newc" t="新建变更" cn="ml-[7px]" caret />
        <Tool i="robot" t="广小二" cn="ml-[9px]" />
        <div className="ml-[7px] w-[185px] h-full bg-[#f9f9f9] pl-[28px] flex items-center text-[#3d6a00] whitespace-nowrap">楼梯里高端平板净长是..</div>
        <Tool i="phone" t="13907298339" cn="ml-[8px]" caret />
        <span className="ml-[9px] whitespace-nowrap">造价豆:0</span>
        <span className="ml-[7px]"><I n="bell" /></span>
        <More cn="ml-auto mr-[3px]" />
      </div>

      {/* 主工具栏 */}
      <div className="h-[31px] flex items-center shrink-0 gap-[4px] pb-[2px]">
        <div className="h-[28px] w-[148px] bg-[#f5f5f5] flex items-center pl-[5px] shrink-0">
          <I n="doc" />
          <span className="ml-[5px]"><I n="open" /></span>
          <Caret cn="ml-[5px]" />
          <span className="ml-[7px]"><I n="save" /></span>
          <Sep cn="ml-[7px] !mr-0" />
          <span className="ml-[7px]"><I n="undo" /></span>
          <Caret cn="ml-[8px]" />
          <More cn="ml-[20px]" />
        </div>
        <div className="h-[28px] w-[548px] bg-[#f5f5f5] flex items-center pl-[4px] gap-[7px] shrink-0">
          <Tool i="define" t="定义" />
          <Tool i="sigma" t="汇总计算" />
          <Tool i="cloud" t="云检查" />
          <Tool i="flush" t="平齐板顶" off />
          <Tool i="binoc" t="查找图元" />
          <Tool i="glass" t="查看钢筋量" />
          <Tool i="batch" t="批量选择" off />
          <More cn="ml-[30px]" />
        </div>
        <div className="h-[28px] flex-1 bg-[#f5f5f5] flex items-center pl-[3px]">
          <Tool i="cube" t="三维" cn="bg-white h-[24px] pr-[1px]" />
          <Caret cn="ml-[5px]" />
          <Tool i="top" t="俯视" cn="ml-[7px]" />
          <Caret cn="ml-[6px]" />
          <On i="orbit" t="动态观察" cn="ml-[5px] pl-[4px] pr-[2px] !gap-[2px]" />
          <Tool i="local" t="局部三维" cn="ml-[4px]" off />
          <Sep cn="ml-[7px] !mr-0" />
          <Tool i="full" t="全屏" cn="ml-[5px]" />
          <Tool i="zoom" t="缩放" cn="ml-[7px]" />
          <Caret cn="ml-[6px]" />
          <Tool i="pan" t="平移" cn="ml-[7px]" />
          <Caret cn="ml-[6px]" />
          <Tool i="spin" t="屏幕旋转" cn="ml-[7px]" caret />
          <Sep cn="ml-[4px] !mr-0" />
          <Tool i="floors" t="选择楼层" cn="ml-[2px]" />
          <More cn="ml-auto mr-[3px]" />
        </div>
      </div>

      {/* 主体 */}
      <div className="flex h-[624px] shrink-0">
        <TreePanel />
        <div className="ml-[5px] w-[1108px] flex flex-col">
          <div className="h-[26px] flex items-center shrink-0 pt-[1px]">
            <div className="h-[25px] ml-[4px] w-[787px] bg-[#f5f5f5] flex items-center gap-[7px] pl-[1px]">
              <Grip cn="-mr-[3px]" />
              <Tool i="brush" t="删除" off />
              <Sep />
              <Tool i="copy" t="复制" off />
              <Tool i="mirror" t="镜像" off />
              <Sep />
              <Tool i="move" t="移动" off />
              <Tool i="rot" t="旋转" off />
              <Sep />
              <Tool i="extend" t="延伸" off />
              <Tool i="trim" t="修剪" off />
              <Sep />
              <Tool i="breakl" t="打断" off />
              <Tool i="merge" t="合并" off />
              <Tool i="split" t="分割" off />
              <Sep />
              <Tool i="align" t="对齐" off caret />
              <Tool i="offset" t="偏移" cn="-ml-[3px]" off />
              <Tool i="stretch" t="拉伸" off />
              <Sep />
              <Tool i="gripset" t="设置夹点" off />
            </div>
          </div>

          <div className="h-[28px] flex items-center shrink-0 pt-[1px]">
            <div className="h-[27px] ml-[4px] w-[563px] bg-[#f5f5f5] flex items-center">
              <Grip cn="mr-[1px]" />
              <Combo t="第3层" cn="ml-[2px] w-[58px]" />
              <Combo t="自定义" cn="ml-[3px] w-[67px]" />
              <Combo t="自定义线" cn="ml-[4px] w-[70px]" />
              <Combo t="ZDYX-6" cn="ml-[2px] w-[70px]" />
              <Sep cn="ml-[5px] !mr-0" />
              <Tool i="attr" t="属性" cn="ml-[4px]" />
              <On i="pencil" t="编辑钢筋" cn="ml-[4px] px-[2px]" />
              <Grip cn="ml-[3px]" />
              <Tool i="list" t="构件列表" cn="ml-0" />
              <Tool i="pick" t="拾取构件" cn="ml-[7px]" />
            </div>
            <div className="h-[27px] ml-[74px] w-[422px] bg-[#f5f5f5] flex items-center pl-[3px]">
              <Grip cn="mr-[1px]" />
              <Tool i="twop" t="两点" cn="ml-[4px]" />
              <Tool i="para" t="平行" cn="ml-[8px]" />
              <Tool i="angle" t="点角" cn="ml-[6px]" />
              <Caret cn="ml-[6px]" />
              <Tool i="threea" t="三点辅轴" cn="ml-[7px]" />
              <Caret cn="ml-[6px]" />
              <Tool i="delaxis" t="删除辅轴" cn="ml-[6px]" />
              <Tool i="dims" t="尺寸标注" cn="ml-[8px]" />
              <Caret cn="ml-[7px]" />
            </div>
          </div>

          <div className="h-[28px] shrink-0 pt-[2px]">
            <div className="ml-[414px] w-[30px] h-[23px] bg-[#f7f7f7]" />
          </div>

          <div className="h-[28px] flex items-center shrink-0">
            <div className="h-[27px] ml-[89px] w-[485px] bg-[#f5f5f5] flex items-center pl-[5px]">
              <Grip cn="mr-[1px]" />
              <Tool i="cursor" t="选择" cn="ml-[1px]" />
              <Caret cn="ml-[6px]" />
              <Sep cn="ml-[7px] !mr-0" />
              <Tool i="line" t="直线" cn="ml-[5px]" />
              <Tool i="ptlen" t="点加长度" cn="ml-[7px]" />
              <Tool i="arc" t="三点画弧" cn="ml-[8px]" />
              <Caret cn="ml-[6px]" />
              <Combo t="" cn="ml-[4px] w-[55px] !pr-[2px]" />
              <Tool i="rect" t="矩形" cn="ml-[5px]" />
              <Sep cn="ml-[7px] !mr-0" />
              <Tool i="smart" t="智能布置" cn="ml-[4px]" />
              <Caret cn="ml-[3px]" />
            </div>
          </div>

          {/* 三维视图 */}
          <div className="relative h-[279px] shrink-0 overflow-hidden">
            <Scene />
            <div className="absolute left-[10px] top-[3px] w-[167px] h-[177px] bg-white shadow-[2px_2px_4px_rgba(0,0,0,0.55)] flex flex-col">
              <div className="h-[31px] shrink-0 flex items-center pl-[8px] text-[#a3a3a3]">钢筋显示控制面板</div>
              <div className="flex-1 border-2 border-[#8a8f96] pt-[1px]">
                <CheckRow t="横向钢筋" />
                <CheckRow t="显示其它图元" />
                <CheckRow t="显示详细公式" />
              </div>
            </div>
          </div>

          {/* 捕捉工具栏 */}
          <div className="h-[35px] flex items-center shrink-0 pb-[5px]">
            <div className="h-[28px] ml-[3px] w-[208px] bg-[#f5f5f5] flex items-center pl-[2px]">
              <Grip cn="mr-[1px]" />
              <Tool i="ortho" t="正交" cn="ml-[3px]" />
              <On i="snap" t="对象捕捉" cn="ml-[3px] px-[3px]" />
              <On i="dyn" t="动态输入" cn="px-[3px] -ml-px" />
            </div>
            <div className="h-[28px] ml-[1px] w-[263px] bg-[#f5f5f5] flex items-center pl-[3px]">
              <Grip cn="mr-[1px]" />
              <Tool i="cross" t="交点" cn="ml-[3px]" />
              <On i="perp" t="垂点" cn="ml-[4px] pl-[2px] pr-[3px]" />
              <On i="mid" t="中点" cn="pl-[2px] pr-[3px] -ml-px" />
              <Tool i="vertex" t="顶点" cn="ml-[5px]" />
              <Tool i="coord" t="坐标" cn="ml-[6px]" />
            </div>
            <div className="h-[28px] ml-[2px] w-[411px] bg-[#f5f5f5] flex items-center pl-[1px]">
              <Grip cn="mr-[1px]" />
              <Combo t="不偏移" cn="ml-[4px] w-[58px]" />
              <Sep cn="ml-[5px] !mr-0 !h-[22px]" />
              <span className="text-[#808080]">X=</span>
              <Spin t="0" cn="ml-[6px] w-[57px]" />
              <span className="ml-[2px] text-[#808080]">mm</span>
              <span className="ml-[3px] text-[#808080]">Y=</span>
              <Spin t="0" cn="ml-[3px] w-[58px]" />
              <span className="ml-[2px] text-[#808080]">mm</span>
              <Sep cn="ml-[5px] !mr-0 !h-[22px]" />
              <span className="ml-[3px] w-[11px] h-[11px] border border-[#888] bg-white" />
              <span className="ml-[9px]">旋转</span>
              <Spin t="0.000" cn="ml-[5px] w-[68px]" />
              <span className="ml-[3px] text-[#808080]">°</span>
            </div>
          </div>

          {/* 钢筋表 */}
          <div className="flex h-[200px] shrink-0">
            <div className="w-[12px] shrink-0 bg-[#efefef] bg-[radial-gradient(#aaa_1.2px,transparent_1.2px)] bg-[length:4px_4px] relative">
              <span className="absolute left-0 top-[1px] w-[12px] h-[11px] bg-[#e8e8e8] border border-[#777] flex items-center justify-center">
                <X size={9} className="text-[#a02020]" strokeWidth={3} />
              </span>
            </div>
            <div className="w-[1096px] flex flex-col">
              <div className="h-[27px] shrink-0 bg-[#fafafa] flex items-center pb-[3px]">
                <span className="ml-[3px]"><I n="first" /></span>
                <span className="ml-[11px]"><I n="prev" /></span>
                <span className="ml-[6px]"><I n="next" /></span>
                <span className="ml-[8px]"><I n="last" /></span>
                <Sep cn="ml-[7px] !mr-0" />
                <span className="ml-[6px]"><I n="up" /></span>
                <span className="ml-[7px]"><I n="down" /></span>
                <Sep cn="ml-[8px] !mr-0" />
                <Tool i="ins" t="插入" cn="ml-[1px]" off />
                <Tool i="del" t="删除" cn="ml-[6px]" off />
                <Tool i="scale" t="缩尺配筋" cn="ml-[8px] !gap-[3px]" off />
                <Tool i="info" t="钢筋信息" cn="ml-[7px]" />
                <Tool i="lib" t="钢筋图库" cn="ml-[7px]" />
                <Tool i="other" t="其他" cn="ml-[7px]" caret />
                <span className="ml-[8px]">关闭</span>
                <Sep cn="ml-[7px] !mr-0" />
                <span className="ml-[6px] whitespace-nowrap">单构件钢筋总重(kg)：26.936</span>
              </div>
              <div className="w-[1095px] ml-[1px] h-[153px] shrink-0 bg-white overflow-hidden">
                <SteelTable />
              </div>
              <div className="h-[15px] shrink-0 bg-[#f0f0f0] flex items-center relative">
                <ChevronLeft size={12} strokeWidth={3} className="ml-[3px] text-[#444] shrink-0" />
                <span className="ml-[3px] w-[702px] h-full bg-[#c8c8c8]" />
                <ChevronRight size={12} strokeWidth={3} className="ml-auto mr-[6px] text-[#444]" />
              </div>
              <div className="h-[5px] shrink-0 border-t border-[#a8a8a8]" />
            </div>
          </div>
        </div>
      </div>

      {/* 状态栏 */}
      <div className="h-[20px] shrink-0 flex items-stretch gap-[2px] pb-[1px]">
        <div className="w-[148px] border border-[#d4d4d4] bg-[#f6f6f6] flex items-center pl-[1px]"><Sim t="X=26606 Y=11966" /></div>
        <div className="w-[77px] border border-[#d4d4d4] bg-[#f6f6f6] flex items-center pl-[1px]"><Sim t="层高:2.8m" /></div>
        <div className="w-[98px] ml-[1px] border border-[#d4d4d4] bg-[#f6f6f6] flex items-center pl-[1px]"><Sim t="底标高:7.47m" /></div>
        <div className="w-[48px] border border-[#d4d4d4] bg-[#f6f6f6] flex items-center pl-[1px]"><Sim t="1(1)" /></div>
        <div className="w-[914px] border border-[#d4d4d4] bg-[#f6f6f6]" />
        <div className="flex-1 border border-[#d4d4d4] bg-[#f6f6f6] flex items-center pl-[1px]"><Sim t="269.9 FPS" /></div>
      </div>

      <Taskbar />

      {/* 搜狗输入法状态条 */}
      <div className="absolute left-[866px] top-[4px] flex items-center">
        <div className="w-[159px] ml-[26px] h-[23px] bg-[#f4f8fc] border border-[#b8cfe0] flex items-center pl-[7px] text-[#1f7fc8]">
          <span className="text-[14px] font-bold">英</span>
          <span className="ml-[10px] text-[13px] font-bold leading-none">'<span className="ml-[1px]">,</span></span>
          <svg width="12" height="16" viewBox="0 0 12 16" fill="#1f7fc8" className="ml-[10px]"><rect x="3" y="0" width="6" height="11" rx="3" /><path d="M1 7c0 7 10 7 10 0M6 12v3" stroke="#1f7fc8" fill="none" /></svg>
          <svg width="16" height="12" viewBox="0 0 16 12" className="ml-[7px]"><rect width="16" height="12" rx="2" fill="#1f7fc8" /><path d="M2 3h12M2 6h12M3 9h10" stroke="#fff" strokeDasharray="1.500 1" /></svg>
          <svg width="16" height="16" viewBox="0 0 16 16" fill="#b8c4d0" className="ml-[10px]"><circle cx="6" cy="4" r="3" /><path d="M0 14c0-8 12-8 12 0z" /></svg>
          <svg width="14" height="14" viewBox="0 0 14 14" fill="#1f7fc8" className="ml-[4px]"><path d="M4 1h6l4 3-2 2-1-1v9H3V5L2 6 0 4z" /></svg>
          <svg width="14" height="14" viewBox="0 0 14 14" fill="none" stroke="#1f7fc8" strokeWidth="3" className="ml-[5px]"><path d="M2 13l7-7" /><path d="M8 6a3 3 0 0 1 4-4" strokeWidth="2.400" /></svg>
        </div>
        <span className="absolute left-0 top-[-1px] w-[26px] h-[26px] rounded-[4px] bg-[#f2541b] rotate-[-6deg] text-white font-bold text-[22px] flex items-center justify-center leading-none">S</span>
      </div>

      {/* 绿色加速球 */}
      <div className="absolute left-[1108px] top-[-27px] w-[45px] h-[45px] rounded-full bg-[#3fbb3f] border-[3px] border-[#c4c8c4] shadow-[0_1px_3px_rgba(0,0,0,0.5)] flex items-end justify-center pb-[5px] text-white font-bold text-[11px]">71</div>
    </div>
  );
}
